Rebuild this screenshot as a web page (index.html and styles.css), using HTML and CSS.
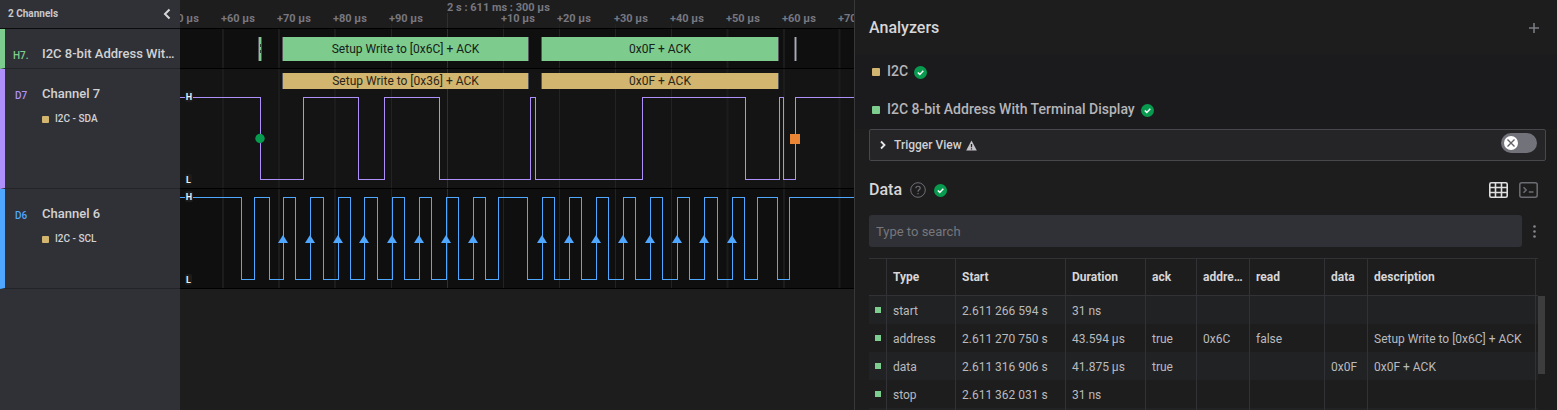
FILE: index.html
```html
<!DOCTYPE html>
<html lang="en">
<head>
<meta charset="utf-8">
<title>Logic Analyzer</title>
<link rel="stylesheet" href="styles.css">
</head>
<body>
<svg class="defs" aria-hidden="true">
  <defs>
    <g id="grid">
      <path class="grid-soft" d="M43 0V120M99 0V120M155 0V120M659.500 0V120M604 0V120M547.500 0V120"/>
      <path class="grid-line" d="M211.500 0V120M323.500 0V120M379.500 0V120M435.500 0V120M491.500 0V120"/>
      <path class="grid-major" d="M267.500 0V120"/>
    </g>
    <path id="edge" d="M0 46L5 54H-5Z"/>
    <symbol id="check" viewBox="0 0 13 13">
      <circle cx="6.500" cy="6.500" r="6.500" fill="#089b4f"/>
      <path d="M3.800 6.500L5.800 8.400L9.300 4.800" fill="none" stroke="#fff" stroke-width="1.500"/>
    </symbol>
  </defs>
</svg>
<div class="app">
  <aside class="channels">
    <header class="channels-head">
      <span>2 Channels</span>
      <button class="icon-btn" type="button" aria-label="Collapse channels">
        <svg width="10" height="12" viewBox="0 0 10 12"><path d="M7.500 1.500L3 6L7.500 10.500" fill="none" stroke="#d6d6d8" stroke-width="2"/></svg>
      </button>
    </header>
    <section class="channel channel-h7">
      <span class="tag">H7.</span>
      <div class="info"><h3>I2C 8-bit Address With Terminal Display</h3></div>
    </section>
    <section class="channel channel-d7">
      <span class="tag">D7</span>
      <div class="info"><h3>Channel 7</h3><p><i class="chip"></i>I2C - SDA</p></div>
    </section>
    <section class="channel channel-d6">
      <span class="tag">D6</span>
      <div class="info"><h3>Channel 6</h3><p><i class="chip"></i>I2C - SCL</p></div>
    </section>
  </aside>

  <main class="graph">
    <svg class="ruler">
      <path class="grid-soft" d="M43 24V28M99 24V28M155 24V28M659.500 24V28M604 24V28M547.500 24V28"/>
      <path class="grid-line" d="M211.500 24V28M323.500 24V28M379.500 24V28M435.500 24V28M491.500 24V28"/>
      <path class="grid-major" d="M267.500 13V28"/>
      <text x="267" y="11">2 s : 611 ms : 300 µs</text>
      <text x="-15" y="22">+50 µs</text>
      <text x="41" y="22">+60 µs</text>
      <text x="97" y="22">+70 µs</text>
      <text x="153" y="22">+80 µs</text>
      <text x="209" y="22">+90 µs</text>
      <text x="321" y="22">+10 µs</text>
      <text x="377" y="22">+20 µs</text>
      <text x="434" y="22">+30 µs</text>
      <text x="490" y="22">+40 µs</text>
      <text x="546" y="22">+50 µs</text>
      <text x="602" y="22">+60 µs</text>
      <text x="658" y="22">+70 µs</text>
    </svg>
    <svg class="track track-h7">
      <use href="#grid"/>
      <g class="frame-edge">
        <rect x="78" y="8" width="4" height="24"/><rect x="102" y="8" width="247" height="24"/>
        <rect x="361" y="8" width="238" height="24"/><rect x="614" y="8" width="3" height="24"/>
      </g>
      <g class="frame-green">
        <rect x="79" y="8" width="2" height="24"/><rect x="103" y="8" width="245" height="24"/>
        <rect x="362" y="8" width="236" height="24"/><rect x="615" y="8" width="1" height="24"/>
      </g>
      <path d="M80.500 15V18M80.500 21V24" stroke="#2c4a35"/>
      <text x="225.500" y="24">Setup Write to [0x6C] + ACK</text>
      <text x="480" y="24">0x0F + ACK</text>
    </svg>
    <svg class="track track-d7">
      <use href="#grid"/>
      <g class="frame-edge"><rect x="102" y="4" width="247" height="16"/><rect x="361" y="4" width="238" height="16"/></g>
      <g class="frame-gold"><rect x="103" y="4" width="245" height="16"/><rect x="362" y="4" width="236" height="16"/></g>
      <text x="225.500" y="16">Setup Write to [0x36] + ACK</text>
      <text x="480" y="16">0x0F + ACK</text>
      <path class="wave" d="M0 28.500H80.500V110.500H123.500V28.500H178.500V110.500H204.500V28.500H259.500V110.500H350.500V28.500H355.500V110.500H462.500V28.500H565.500V110.500H599.500V28.500H603.500V110.500H615.500V28.500H4000"/>
      <circle cx="80" cy="69.500" r="4.700" fill="#089b4f"/>
      <rect x="610" y="65" width="10" height="10" fill="#e98535"/>
      <rect class="level-bg" x="5" y="22" width="8" height="11" rx="2"/><text class="level" x="9" y="31">H</text>
      <rect class="level-bg" x="5" y="105" width="7" height="11" rx="2"/><text class="level" x="8.500" y="114">L</text>
    </svg>
    <svg class="track track-d6">
      <use href="#grid"/>
      <path class="wave" d="M0 8.500H61.500V90.500H74.500V8.500H89.500V90.500H103.500V8.500H115.500V90.500H130.500V8.500H143.500V90.500H158.500V8.500H170.500V90.500H184.500V8.500H197.500V90.500H212.500V8.500H224.500V90.500H239.500V8.500H251.500V90.500H266.500V8.500H278.500V90.500H293.500V8.500H305.500V90.500H318.500V8.500H347.500V90.500H362.500V8.500H374.500V90.500H389.500V8.500H401.500V90.500H416.500V8.500H428.500V90.500H443.500V8.500H455.500V90.500H470.500V8.500H482.500V90.500H497.500V8.500H509.500V90.500H524.500V8.500H537.500V90.500H552.500V8.500H564.500V90.500H577.500V8.500H597.500V90.500H609.500V8.500H4000"/>
      <g class="edges">
        <use href="#edge" x="103"/><use href="#edge" x="130"/><use href="#edge" x="158"/><use href="#edge" x="184"/>
        <use href="#edge" x="212"/><use href="#edge" x="239"/><use href="#edge" x="266"/><use href="#edge" x="293"/>
        <use href="#edge" x="362"/><use href="#edge" x="389"/><use href="#edge" x="416"/><use href="#edge" x="443"/>
        <use href="#edge" x="470"/><use href="#edge" x="497"/><use href="#edge" x="524"/><use href="#edge" x="552"/>
      </g>
      <rect class="level-bg" x="5" y="2" width="8" height="11" rx="2"/><text class="level" x="9" y="11">H</text>
      <rect class="level-bg" x="5" y="85" width="7" height="11" rx="2"/><text class="level" x="8.500" y="94">L</text>
    </svg>
  </main>

  <section class="panel">
    <header class="panel-head">
      <h2>Analyzers</h2>
      <button class="icon-btn" type="button" aria-label="Add analyzer">
        <svg width="10" height="10" viewBox="0 0 10 10"><path d="M5 0V10M0 5H10" stroke="#7b7b84" stroke-width="1.600"/></svg>
      </button>
    </header>
    <ul class="analyzers">
      <li><i class="chip"></i><span>I2C</span><svg class="ok" role="img" aria-label="OK"><use href="#check"/></svg></li>
      <li><i class="chip chip-green"></i><span>I2C 8-bit Address With Terminal Display</span><svg class="ok" role="img" aria-label="OK"><use href="#check"/></svg></li>
    </ul>
    <div class="trigger">
      <button class="trigger-toggle" type="button" aria-expanded="false">
        <svg width="6" height="10" viewBox="0 0 6 10"><path d="M1 1.500L4.500 5L1 8.500" fill="none" stroke="#e6e6e6" stroke-width="1.800"/></svg>
        <span>Trigger View</span>
        <svg width="11" height="11" viewBox="0 0 11 11"><path d="M5.500 .5L10.800 10.500H.2Z" fill="#c4c4c8"/><path d="M5.500 4V7.200M5.500 8.200V9.500" stroke="#252528" stroke-width="1.300"/></svg>
      </button>
      <label class="switch">
        <input type="checkbox" aria-label="Trigger View">
        <span class="knob"><svg width="8" height="8" viewBox="0 0 8 8"><path d="M.5 .5L7.500 7.500M7.500 .5L.5 7.500" stroke="#62626a" stroke-width="1.400"/></svg></span>
      </label>
    </div>
    <header class="data-head">
      <h2>Data</h2>
      <button class="icon-btn help" type="button" aria-label="Help">
        <svg width="16" height="16" viewBox="0 0 16 16" fill="none" stroke="#6e6e77"><circle cx="8" cy="8" r="7.300"/><path d="M5.900 6.300C5.900 3.600 10.200 3.600 10.200 6.200C10.200 7.900 8 7.800 8 9.700M8 11V12.200" stroke-width="1.200"/></svg>
      </button>
      <svg class="ok" role="img" aria-label="OK"><use href="#check"/></svg>
      <div class="views">
        <button class="icon-btn" type="button" aria-label="Table view">
          <svg width="19" height="16" viewBox="0 0 19 16" fill="none" stroke="#dfdfe2" stroke-width="1.600"><rect x=".8" y=".8" width="17.400" height="14.400" rx="1.500"/><path d="M.8 5.500H18.200M.8 10.500H18.200M6.500 .8V15.200M12.500 .8V15.200"/></svg>
        </button>
        <button class="icon-btn" type="button" aria-label="Terminal view">
          <svg width="19" height="16" viewBox="0 0 19 16" fill="none" stroke="#6c6c75" stroke-width="1.500"><rect x=".8" y=".8" width="17.400" height="14.400" rx="2"/><path d="M4.500 5.200L7.200 8L4.500 10.800M9.800 10H14.500"/></svg>
        </button>
      </div>
    </header>
    <div class="search">
      <input type="text" placeholder="Type to search" aria-label="Search data">
      <button class="icon-btn" type="button" aria-label="More options">
        <svg width="3" height="13" viewBox="0 0 3 13" fill="#85858d"><circle cx="1.500" cy="1.500" r="1.300"/><circle cx="1.500" cy="6.500" r="1.300"/><circle cx="1.500" cy="11.500" r="1.300"/></svg>
      </button>
    </div>
    <div class="table-wrap">
      <table>
        <colgroup><col class="c-mark"><col class="c-type"><col class="c-start"><col class="c-dur"><col class="c-ack"><col class="c-addr"><col class="c-read"><col class="c-data"><col class="c-desc"><col class="c-end"></colgroup>
        <thead><tr><th></th><th>Type</th><th>Start</th><th>Duration</th><th>ack</th><th>address</th><th>read</th><th>data</th><th>description</th><th></th></tr></thead>
        <tbody>
          <tr><td><i class="dot"></i></td><td>start</td><td>2.611 266 594 s</td><td>31 ns</td><td></td><td></td><td></td><td></td><td></td><td></td></tr>
          <tr><td><i class="dot"></i></td><td>address</td><td>2.611 270 750 s</td><td>43.594 µs</td><td>true</td><td>0x6C</td><td>false</td><td></td><td>Setup Write to [0x6C] + ACK</td><td></td></tr>
          <tr><td><i class="dot"></i></td><td>data</td><td>2.611 316 906 s</td><td>41.875 µs</td><td>true</td><td></td><td></td><td>0x0F</td><td>0x0F + ACK</td><td></td></tr>
          <tr><td><i class="dot"></i></td><td>stop</td><td>2.611 362 031 s</td><td>31 ns</td><td></td><td></td><td></td><td></td><td></td><td></td></tr>
          <tr><td></td><td></td><td></td><td></td><td></td><td></td><td></td><td></td><td></td><td></td></tr>
        </tbody>
      </table>
      <div class="scrollbar"><div class="thumb"></div></div>
    </div>
  </section>
</div>
</body>
</html>
```
FILE: styles.css
```css
* { box-sizing: border-box; }
body { margin: 0; background: #1d1d1d; color: #c8c8ca; font: 12px/16px Roboto, sans-serif; }
h2, h3, p, ul { margin: 0; padding: 0; }
svg { display: block; flex: none; }
.defs { position: absolute; width: 0; height: 0; }

.app {
  display: grid;
  grid-template-columns: 180px minmax(0, 675fr) minmax(0, 702fr);
  height: 100vh;
  overflow: hidden;
}
.icon-btn { display: flex; align-items: center; justify-content: center; padding: 0; border: 0; background: none; cursor: pointer; }

/* Channel list */
.channels { background: #303136; }
.channels-head {
  display: flex; align-items: center; justify-content: space-between;
  height: 29px; padding: 0 8px; border-bottom: 1px solid #0c0c0d;
  font-size: 10px; font-weight: 700;
}
.channel { display: flex; padding: 17px 4px 0 8px; border-left: 5px solid; border-bottom: 1px solid #232428; }
.channel-h7 { height: 40px; border-left-color: #7dcd8f; color: #7dcd8f; }
.channel-d7 { height: 120px; border-left-color: #ae90fb; color: #ae90fb; }
.channel-d6 { height: 100px; border-left-color: #50a7ff; color: #50a7ff; }
.tag { flex: none; width: 29px; padding: 2px 0 0 2px; font-size: 10px; font-weight: 500; }
.channel-h7 .tag { padding-left: 0; }
.info { min-width: 0; color: #d2d2d4; }
.info h3 { overflow: hidden; font-size: 13px; font-weight: 500; text-overflow: ellipsis; white-space: nowrap; }
.info p { display: flex; align-items: center; gap: 6px; margin-top: 9px; font-size: 10px; font-weight: 500; }
.chip { flex: none; width: 7px; height: 7px; border-radius: 1px; background: #d2b56e; }
.chip-green { background: #7dcd8f; }

/* Waveforms */
.graph { overflow: hidden; border-right: 1px solid #38383b; }
.ruler { width: 100%; height: 29px; border-bottom: 1px solid #000; }
.ruler text { fill: #777780; font-size: 11px; font-weight: 700; }
.track { width: 100%; border-bottom: 1px solid #000; background: #0f0f0f; }
.track text { fill: #172119; font-size: 12px; text-anchor: middle; }
.track-h7 { height: 40px; }
.track-d7 { height: 120px; background: #141414; color: #ae90fb; }
.track-d6 { height: 100px; color: #50a7ff; }
.track-d7 text { fill: #2c2618; }
.grid-soft { stroke: #1c1c1c; stroke-width: 2; }
.grid-line { stroke: #232323; }
.grid-major { stroke: #303033; }
.frame-edge { fill: #55555c; }
.frame-green { fill: #7dcc8e; }
.frame-gold { fill: #d2b56e; }
.wave { fill: none; stroke: currentColor; shape-rendering: crispEdges; }
.edges { fill: currentColor; }
.level-bg { fill: #1c1c1c; }
.track .level { fill: #f0f0f0; font-size: 9px; font-weight: 700; }

/* Analyzer panel */
.panel { display: flex; flex-direction: column; min-width: 0; min-height: 0; }
.panel h2 { color: #d6d6d8; font-size: 16px; font-weight: 500; line-height: 20px; }
.panel-head { display: flex; flex: none; align-items: center; justify-content: space-between; height: 54px; padding: 2px 18px 0 14px; }
.ok { width: 13px; height: 13px; }
.analyzers { flex: none; height: 75px; padding: 7px 17px 0; background: #1b1b1d; list-style: none; }
.analyzers li { display: flex; align-items: center; height: 20px; margin-bottom: 18px; color: #b5b5b9; font-size: 14px; font-weight: 500; }
.analyzers .chip { width: 8px; height: 8px; margin: 2px 7px 0 0; }
.analyzers .ok { margin: 2px 0 0 6px; }
.trigger { display: flex; flex: none; justify-content: space-between; height: 32px; margin: 0 11px 0 14px; padding: 3px 8px 0 10px; border: 1px solid #47474c; border-radius: 2px; background: #252528; }
.trigger-toggle { display: flex; align-items: center; height: 24px; padding: 0; border: 0; background: none; color: #cfcfd2; font: 500 12px/16px Roboto, sans-serif; }
.trigger-toggle span { margin: 0 4px 0 8px; }
.switch { display: flex; align-items: center; width: 36px; height: 20px; padding: 0 3px; border-radius: 10px; background: #72727b; }
.switch input { position: absolute; width: 36px; height: 20px; margin: 0; opacity: 0; }
.knob { display: flex; align-items: center; justify-content: center; width: 14px; height: 14px; border-radius: 50%; background: #fff; }
.data-head { display: flex; flex: none; align-items: center; height: 54px; padding: 4px 19px 0 14px; }
.data-head .help { margin: 0 8px; }
.views { display: flex; gap: 11px; margin-left: auto; }
.search { display: flex; flex: none; align-items: center; gap: 11px; padding: 0 21px 0 14px; }
.search input { flex: 1; min-width: 0; height: 32px; padding: 0 7px; border: 0; border-radius: 3px; background: #303136; color: #d6d6d8; font: 13px/16px Roboto, sans-serif; }
.search input::placeholder { color: #77777c; }

/* Data table */
.table-wrap { display: flex; flex: 1; min-height: 0; margin: 11px 12px 0 14px; overflow: hidden; }
table { flex: 1; width: 100%; min-width: 0; border-collapse: separate; border-spacing: 0; border-top: 1px solid #313136; table-layout: fixed; }
.c-mark { width: 18px; }
.c-type { width: 69px; }
.c-start { width: 110px; }
.c-dur { width: 80px; }
.c-ack { width: 51px; }
.c-addr { width: 53px; }
.c-read { width: 75px; }
.c-data { width: 43px; }
.c-end { width: 2px; }
th, td { overflow: hidden; padding: 0 6px; border-right: 1px solid #313136; text-align: left; text-overflow: ellipsis; white-space: nowrap; }
th:last-child, td:last-child { padding: 0; border-right: 0; }
th { height: 37px; border-bottom: 1px solid #313136; color: #d6d6d8; font-weight: 700; }
td { height: 28px; padding-top: 2px; color: #bababd; }
td:first-child { padding-top: 0; }
tbody tr:nth-child(odd) { background: #212224; }
.dot { display: block; width: 6px; height: 6px; background: #7dcd8f; }
.scrollbar { width: 7px; padding-top: 38px; }
.thumb { height: 78px; background: #3d3d3e; }
```
